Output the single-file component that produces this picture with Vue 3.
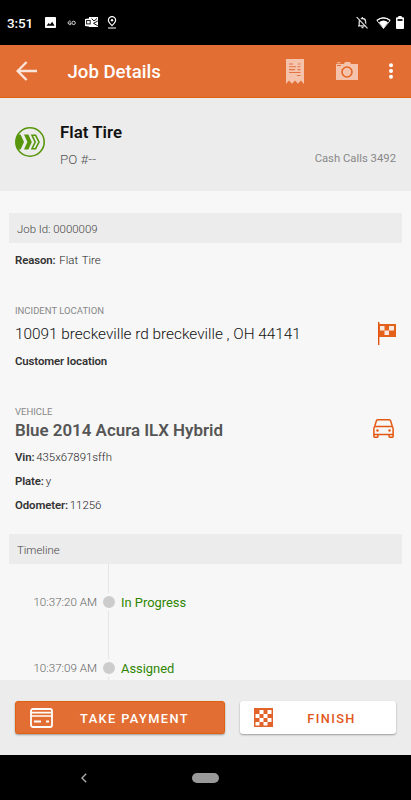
<script setup>
const vehicle = [
  { label: "Vin:", value: "435x67891sffh" },
  { label: "Plate:", value: "y" },
  { label: "Odometer:", value: "11256" },
];

const timeline = [
  { time: "10:37:20 AM", status: "In Progress" },
  { time: "10:37:09 AM", status: "Assigned" },
];
</script>

<template>
  <div class="screen">
    <div class="status-bar">
      <span class="clock">3:51</span>
      <svg class="s-image" width="11" height="11" viewBox="0 0 11 11">
        <rect width="11" height="11" rx="0.8" fill="#fff" />
        <path d="M1.5 8.8 3.7 6 5 7.4 7.2 4.7 9.6 8.8z" fill="#000" />
      </svg>
      <svg class="s-go" width="9" height="6" viewBox="0 0 9 6" fill="none" stroke="#d8d8d8">
        <path d="M3.8 1.3A1.8 1.8 0 1 0 3.8 4.4V3H2.4" />
        <circle cx="6.6" cy="2.9" r="1.7" />
      </svg>
      <svg class="s-mail" width="13" height="11" viewBox="0 0 13 11">
        <path d="M4 0h9v10H4z" fill="#fff" />
        <path d="M0 2l7-1v9L0 9z" fill="#fff" />
        <rect x="1.6" y="3.5" width="3.6" height="3.4" fill="none" stroke="#222" />
        <path d="M6.5 1.5 9 4l3-2.5M12.8 4 8.5 6.3l4.3 2.5" fill="none" stroke="#111" />
      </svg>
      <svg class="s-pin" width="10" height="13" viewBox="0 0 10 13" fill="none" stroke="#fff">
        <path d="M5 9.6C2.6 7.2 1.4 5.8 1.4 4.2a3.6 3.6 0 0 1 7.2 0C8.6 5.8 7.4 7.2 5 9.6z" stroke-width="1.2" />
        <circle cx="5" cy="4.2" r="1.2" fill="#fff" stroke="none" />
        <path d="M1 12h8" />
      </svg>
      <svg class="s-bell" width="13" height="13" viewBox="0 0 13 13" fill="none" stroke="#ddd">
        <path d="M3.2 9.5V6c0-2 1.3-3.5 3.2-3.5S9.6 4 9.6 6v3.5M2 9.8h9M5.5 11.5h2M6.4 1v1.5" stroke-width="1.3" />
        <path d="M1.6 0.6 12.4 11.8" stroke="#000" stroke-width="1.6" />
        <path d="M0.7 1.2 11.5 12.4" stroke-width="1.2" />
      </svg>
      <svg class="s-wifi" width="15" height="12" viewBox="0 0 15 12">
        <path d="M1 3.7C4.8 0.1 10.2 0.1 14 3.7L7.5 11.5z" fill="none" stroke="#ccc" />
        <path d="M.8 3.5C4.8.1 10.2.1 14.2 3.5" fill="none" stroke="#fff" stroke-width="1.3" />
        <path d="M3 5.2a7 7 0 0 1 9 0L7.5 11.5z" fill="#fff" />
      </svg>
      <svg class="s-battery" width="8" height="13" viewBox="0 0 8 13">
        <path d="M2.3 0h3.4v1.3H7q1 0 1 1V12q0 1-1 1H1q-1 0-1-1V2.3q0-1 1-1h1.3z" fill="#fff" />
        <path d="M1.5 3h5v2h-5z" fill="#222" />
      </svg>
    </div>

    <header class="app-bar">
      <svg class="back" width="22" height="20" viewBox="0 0 22 20" fill="none" stroke="#fbe5da" stroke-width="2.4">
        <path d="M10.6 1 1.6 10l9 9M1.6 10H21" />
      </svg>
      <h1>Job Details</h1>
      <svg class="receipt" width="18" height="25" viewBox="0 0 18 25">
        <path d="M0 0h18v25l-3.2-3.6L12 24.7l-3-3.3-3 3.3-3-3.3L0 25z" fill="#f5c3ab" />
        <path
          d="M3 5h4M3 7.8h7M3 10.6h6M3 13.5h11.5M12 5h2.5M11.5 7.8h3M11.5 10.6h3M11 16.5h3.5"
          stroke="#e27546"
          stroke-width="1.1"
        />
      </svg>
      <svg class="camera" width="22" height="18" viewBox="0 0 22 18">
        <path d="M0 2h8l1-2h5l1 2h7v16H0z" fill="#f5c3ab" />
        <path d="M1 .8h3.5" stroke="#f5c3ab" />
        <path d="M1 3.5h4" stroke="#e36e35" />
        <circle cx="11" cy="10" r="5" fill="none" stroke="#e36524" stroke-width="1.6" />
      </svg>
      <svg class="more" width="4" height="16" viewBox="0 0 4 16" fill="#fff">
        <circle cx="2" cy="2.3" r="2" />
        <circle cx="2" cy="8" r="2" />
        <circle cx="2" cy="13.7" r="2" />
      </svg>
    </header>

    <section class="summary">
      <svg class="tire" width="30" height="30" viewBox="0 0 30 30">
        <circle cx="15" cy="15" r="14.2" fill="none" stroke="#57960b" stroke-width="1.6" />
        <path d="M3 7.5h2.6L9 15l-3.4 7.5H3L1 18v-6z" fill="#57960b" />
        <path d="M9 7.5h4.4l3.4 7.5-3.4 7.5H9l3.4-7.5z" fill="#57960b" />
        <path d="M17 8.3h3.6l3.4 6.7-3.4 6.7H17l3.2-6.7z" fill="none" stroke="#57960b" stroke-width="1.6" />
      </svg>
      <div class="summary-text">
        <h2>Flat Tire</h2>
        <p>PO #--</p>
      </div>
      <span class="account">Cash Calls 3492</span>
    </section>

    <main class="content">
      <div class="bar">Job Id: 0000009</div>
      <p class="field reason"><b>Reason:</b> Flat Tire</p>

      <section class="block incident">
        <div class="caption">INCIDENT LOCATION</div>
        <div class="row">
          <span class="address">10091 breckeville rd breckeville , OH 44141</span>
          <svg class="flag" width="18" height="23" viewBox="0 0 18 23">
            <path d="M.7 0v23" stroke="#e3530d" stroke-width="1.4" />
            <path d="M1 2h17v13H1z" fill="#e4611c" />
            <path d="M2 4h4.5v4.5H2zM11 4h5v4.5h-5zM6.5 8.5H11V13H6.5z" fill="#fbe9df" />
          </svg>
        </div>
        <p class="field"><b>Customer location</b></p>
      </section>

      <section class="block vehicle">
        <div class="caption">VEHICLE</div>
        <div class="row">
          <span class="car-name">Blue 2014 Acura ILX Hybrid</span>
          <svg class="car" width="21" height="19" viewBox="0 0 21 19" fill="none" stroke="#e4580f" stroke-width="1.5">
            <path d="M1.6 7.6 3.4 1.8Q3.7.8 4.8.8h11.4q1.1 0 1.4 1l1.8 5.8" />
            <path d="M.9 15.4V9.2q0-1.8 1.6-1.8h16q1.6 0 1.6 1.8v6.2z" />
            <path d="M.9 15.4v2q0 .9 1 .9h2q1 0 1-.9v-2M16.1 15.4v2q0 .9 1 .9h2q1 0 1-.9v-2" />
            <circle cx="4.5" cy="11.5" r="1.2" fill="#e4580f" stroke="none" />
            <circle cx="16.5" cy="11.5" r="1.2" fill="#e4580f" stroke="none" />
          </svg>
        </div>
        <p v-for="v in vehicle" :key="v.label" class="field tight">
          <b>{{ v.label }}</b> {{ v.value }}
        </p>
      </section>

      <div class="bar">Timeline</div>
      <div class="timeline">
        <div v-for="t in timeline" :key="t.time" class="event">
          <span class="time">{{ t.time }}</span>
          <span class="rail"><i class="dot" /></span>
          <span class="state">{{ t.status }}</span>
        </div>
      </div>
    </main>

    <footer class="actions">
      <button class="btn pay">
        <svg width="23" height="20" viewBox="0 0 23 20" fill="none" stroke="#fff">
          <rect x="1" y="1" width="21" height="18" rx="2" stroke-width="1.8" />
          <path d="M1 4.6h21M1 8h21" stroke-width="1.7" />
          <path d="M4 13.5h7M16 13.5h3" stroke-width="1.8" />
        </svg>
        <span>TAKE PAYMENT</span>
      </button>
      <button class="btn finish">
        <svg width="19" height="19" viewBox="0 0 19 19">
          <rect width="19" height="19" fill="#e2632a" />
          <path
            d="M5.5 2h4v4h-4zM13.5 2h4v4h-4zM1.5 6h4v4h-4zM9.5 6h4v4h-4zM5.5 10h4v4h-4zM13.5 10h4v4h-4zM1.5 14h4v3.5h-4zM9.5 14h4v3.5h-4z"
            fill="#fff"
          />
        </svg>
        <span>FINISH</span>
      </button>
    </footer>

    <nav class="nav-bar">
      <svg class="nav-back" width="6" height="10" viewBox="0 0 6 10" fill="none" stroke="#aaa" stroke-width="1.4">
        <path d="M5.2.8 1 5l4.2 4.2" />
      </svg>
      <span class="home" />
    </nav>
  </div>
</template>

<style>
body {
  margin: 0;
}
</style>

<style scoped>
.screen {
  display: flex;
  flex-direction: column;
  width: 411px;
  height: 800px;
  overflow: hidden;
  background: #f7f7f7;
  font-family: Roboto, sans-serif;
  color: #555;
}

h1,
h2,
p {
  margin: 0;
}

svg {
  flex: none;
  display: block;
}

.status-bar {
  display: flex;
  align-items: center;
  flex: none;
  box-sizing: border-box;
  height: 45px;
  padding: 0 7px;
  background: #000;
  color: #fff;
}

.clock {
  width: 38px;
  font-size: 13.5px;
  font-weight: 500;
  letter-spacing: -0.1px;
}

.s-go {
  margin-left: 11px;
}

.s-mail {
  margin-left: 9px;
}

.s-pin {
  margin-left: 9px;
}

.s-bell {
  margin-left: auto;
}

.s-wifi {
  margin-left: 7px;
}

.s-battery {
  margin-left: 5px;
}

.app-bar {
  display: flex;
  align-items: center;
  flex: none;
  box-sizing: border-box;
  height: 53px;
  padding: 0 18px 0 16px;
  background: #e36e33;
  border-bottom: 1px solid #e0610f;
}

.app-bar h1 {
  flex: 1;
  margin-left: 29.5px;
  padding-top: 2px;
  color: #fff;
  font-size: 18.6px;
  font-weight: 500;
}

.camera {
  margin-left: 32px;
}

.more {
  margin-left: 31px;
}

.summary {
  display: flex;
  flex: none;
  box-sizing: border-box;
  height: 93px;
  padding: 0 15px;
  background: #ececec;
}

.tire {
  margin-top: 29px;
}

.summary-text {
  flex: 1;
  padding: 24px 0 0 15px;
}

.summary-text h2 {
  color: #111;
  font-size: 16.9px;
  line-height: 20px;
  font-weight: 600;
}

.summary-text p {
  margin-top: 10px;
  color: #555;
  font-size: 13.4px;
  font-weight: 300;
  line-height: 16px;
}

.account {
  margin-top: 53px;
  color: #888;
  font-size: 11.3px;
  line-height: 15px;
}

.content {
  flex: 1;
  min-height: 0;
  overflow: hidden;
  padding: 22px 9px 0;
}

.bar {
  height: 30px;
  padding-left: 8px;
  background: #ececec;
  color: #444;
  font-size: 11.4px;
  font-weight: 300;
  line-height: 32px;
}

.field {
  color: #222;
  font-size: 11.4px;
  font-weight: 300;
  line-height: 16px;
}

.field b {
  color: #333;
  font-weight: 600;
  letter-spacing: -0.1px;
}

.reason {
  margin: 9px 6px 0;
  word-spacing: 1px;
}

.block {
  padding: 0 6px;
}

.caption {
  color: #888;
  font-size: 9.5px;
  line-height: 12px;
}

.row {
  display: flex;
  align-items: center;
  justify-content: space-between;
}

.incident {
  margin-top: 37px;
}

.incident .row {
  height: 33px;
}

.incident .field {
  margin-top: 3px;
}

.address {
  color: #111;
  font-size: 15.35px;
  font-weight: 300;
}

.vehicle {
  margin-top: 37px;
  padding-bottom: 21px;
}

.vehicle .row {
  height: 23px;
  padding-right: 2px;
}

.car-name {
  color: #555;
  font-size: 16.9px;
  font-weight: 600;
}

.car {
  margin-top: -3px;
}

.tight {
  margin-top: 8px;
  word-spacing: -1px;
}

.event {
  display: grid;
  grid-template-columns: 88px 23px 1fr;
  align-items: center;
  height: 65px;
}

.event:first-child {
  height: 75px;
}

.event + .event {
  margin-top: -4px;
}

.time {
  color: #666;
  font-size: 11.6px;
  font-weight: 300;
  text-align: right;
}

.rail {
  display: flex;
  align-items: center;
  justify-content: center;
  height: 100%;
  background: linear-gradient(#e6e6e6, #e6e6e6) center / 1px 100% no-repeat;
}

.dot {
  width: 12px;
  height: 12px;
  border: 3px solid #f7f7f7;
  border-radius: 50%;
  background: #ccc;
}

.state {
  padding: 2px 0 0 1px;
  color: #2e8500;
  font-size: 12.9px;
}

.actions {
  display: flex;
  flex: none;
  box-sizing: border-box;
  gap: 15px;
  height: 75px;
  padding: 21px 15px;
  background: #ececec;
}

.btn {
  display: flex;
  align-items: center;
  box-sizing: border-box;
  height: 33px;
  padding: 0 15px;
  border: none;
  border-radius: 3px;
  box-shadow: 0 1px 2px rgba(0, 0, 0, 0.35);
  font-family: inherit;
  font-size: 12.8px;
  font-weight: 500;
  letter-spacing: 1.4px;
}

.btn span {
  flex: 1;
  padding-top: 1px;
  text-align: center;
}

.pay {
  width: 210px;
  padding-left: 14px;
  background: #e36e33;
  border: 1px solid #e0610f;
  color: #fff;
}

.pay span {
  padding-left: 7px;
}

.finish {
  width: 156px;
  padding-left: 14px;
  color: #e2561b;
  background: #fff;
}

.finish span {
  padding-left: 9px;
}

.nav-bar {
  display: flex;
  align-items: center;
  flex: none;
  height: 45px;
  background: #000;
}

.nav-back {
  margin-left: 81px;
}

.home {
  width: 27px;
  height: 10px;
  margin-left: 105px;
  border-radius: 5px;
  background: #999;
}
</style>
